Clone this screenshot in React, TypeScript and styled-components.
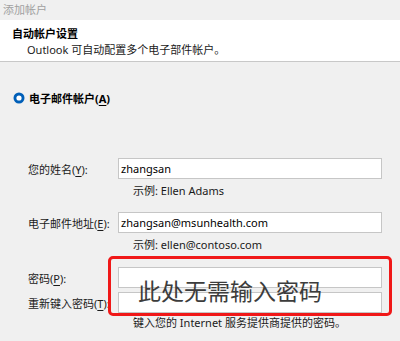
import styled, { createGlobalStyle } from "styled-components";

const GlobalStyle = createGlobalStyle`
  html, body {
    margin: 0;
    padding: 0;
    background: #f0f0f0;
  }
  body {
    font-family: "Noto Sans", "Noto Sans CJK SC", sans-serif;
    font-size: 11px;
    color: #1a1a1a;
  }
`;

const Window = styled.div`
  width: 400px;
  height: 341px;
  overflow: hidden;
  background: #f0f0f0;
`;

const TitleBar = styled.div`
  height: 20px;
  line-height: 19px;
  padding-left: 3px;
  color: #a0a0a0;
`;

const Header = styled.div`
  height: 42px;
  box-sizing: border-box;
  padding: 6px 0 0 12px;
  background: #fff;
  border-bottom: 1px solid #c8c8c8;

  h1 {
    margin: 0;
    font-size: 11px;
    font-weight: 700;
    line-height: 16px;
    color: #000;
  }

  p {
    margin: 0;
    padding-left: 15px;
    line-height: 16px;
  }
`;

const Body = styled.div`
  padding: 28px 0 0 13px;
`;

const RadioRow = styled.label`
  display: flex;
  align-items: center;
  gap: 4px;
  height: 16px;
  font-weight: 700;
  color: #000;
`;

const Form = styled.div`
  display: flex;
  flex-direction: column;
  margin: 52px 0 0 15px;
`;

const Row = styled.div`
  display: flex;
  align-items: center;
`;

const Label = styled.span`
  width: 90px;
  flex-shrink: 0;
  color: #1a1a1a;
`;

const Input = styled.div`
  width: 264px;
  height: 21px;
  box-sizing: border-box;
  border: 1px solid #c6c6c6;
  background: #fff;
  padding-left: 2px;
  line-height: 19px;
  color: #000;
`;

const Hint = styled.div`
  margin: 4px 0 0 105px;
  line-height: 16px;
  color: #1a1a1a;
`;

const Spacer = styled.div<{ $h: number }>`
  height: ${(p) => p.$h}px;
`;

const PasswordGroup = styled.div`
  position: relative;
  display: flex;
  flex-direction: column;
  gap: 4px;
`;

const Highlight = styled.div`
  position: absolute;
  left: 80px;
  top: -11px;
  width: 284px;
  height: 60px;
  box-sizing: border-box;
  border: 3px solid #f01818;
  border-radius: 5px;
  pointer-events: none;
`;

const Note = styled.div`
  position: absolute;
  left: 110px;
  top: 9px;
  font-family: "Noto Sans CJK SC", sans-serif;
  font-size: 23px;
  line-height: 28px;
  color: #3c3c3c;
  white-space: nowrap;
  pointer-events: none;
`;

const Key = styled.u`
  text-underline-offset: 2px;
`;

const RadioIcon = () => (
  <svg width="12" height="12" viewBox="0 0 12 12">
    <circle cx="6" cy="6" r="5.5" fill="#005fb8" />
    <circle cx="6" cy="6" r="2.6" fill="#fff" />
  </svg>
);

export default function App() {
  return (
    <>
      <GlobalStyle />
      <Window>
        <TitleBar>添加帐户</TitleBar>
        <Header>
          <h1>自动帐户设置</h1>
          <p>Outlook 可自动配置多个电子部件帐户。</p>
        </Header>
        <Body>
          <RadioRow>
            <RadioIcon />
            <span>
              电子邮件帐户(<Key>A</Key>)
            </span>
          </RadioRow>
          <Form>
            <Row>
              <Label>
                您的姓名(<Key>Y</Key>):
              </Label>
              <Input>zhangsan</Input>
            </Row>
            <Hint>示例: Ellen Adams</Hint>
            <Spacer $h={13} />
            <Row>
              <Label>
                电子邮件地址(<Key>E</Key>):
              </Label>
              <Input>zhangsan@msunhealth.com</Input>
            </Row>
            <Hint>示例: ellen@contoso.com</Hint>
            <Spacer $h={14} />
            <PasswordGroup>
              <Row>
                <Label>
                  密码(<Key>P</Key>):
                </Label>
                <Input />
              </Row>
              <Row>
                <Label>
                  重新键入密码(<Key>T</Key>):
                </Label>
                <Input />
              </Row>
              <Highlight />
              <Note>此处无需输入密码</Note>
            </PasswordGroup>
            <Hint style={{ marginTop: 2 }}>
              键入您的 Internet 服务提供商提供的密码。
            </Hint>
          </Form>
        </Body>
      </Window>
    </>
  );
}
